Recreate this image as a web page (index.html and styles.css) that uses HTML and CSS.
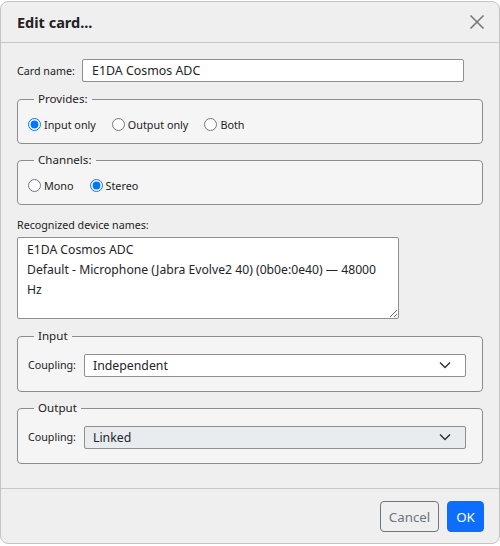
FILE: index.html
```html
<!DOCTYPE html>
<html>
<head>
<meta charset="utf-8">
<link rel="stylesheet" href="styles.css">
</head>
<body>
<div class="dialog">
  <div class="header">
    <h1 class="title">Edit card...</h1>
    <button class="close" aria-label="Close">
      <svg width="16" height="16" viewBox="0 0 16 16"><path d="M1.5 1.5 L14.5 14.5 M14.5 1.5 L1.5 14.5" stroke="#777" stroke-width="1.6" fill="none"/></svg>
    </button>
  </div>
  <div class="body">
    <div class="row name-row">
      <label class="lbl name-lbl" for="cn">Card name:</label>
      <input id="cn" class="text" type="text" value="E1DA Cosmos ADC">
    </div>

    <fieldset class="group">
      <legend>Provides:</legend>
      <div class="radios">
        <label class="radio"><input type="radio" name="prov" checked><span>Input only</span></label>
        <label class="radio"><input type="radio" name="prov"><span>Output only</span></label>
        <label class="radio"><input type="radio" name="prov"><span>Both</span></label>
      </div>
    </fieldset>

    <fieldset class="group">
      <legend>Channels:</legend>
      <div class="radios">
        <label class="radio"><input type="radio" name="ch"><span>Mono</span></label>
        <label class="radio"><input type="radio" name="ch" checked><span>Stereo</span></label>
      </div>
    </fieldset>

    <label class="lbl names-lbl" for="names">Recognized device names:</label>
    <textarea id="names" class="names">E1DA Cosmos ADC
Default - Microphone (Jabra Evolve2 40) (0b0e:0e40) — 48000 Hz</textarea>

    <fieldset class="group io">
      <legend>Input</legend>
      <div class="row">
        <label class="lbl coup-lbl">Coupling:</label>
        <div class="select-wrap">
          <select class="select"><option>Independent</option><option>Linked</option></select>
          <svg class="chev" width="12" height="8" viewBox="0 0 12 8"><path d="M1 1.5 L6 6.5 L11 1.5" stroke="#333" stroke-width="1.5" fill="none"/></svg>
        </div>
      </div>
    </fieldset>

    <fieldset class="group io">
      <legend>Output</legend>
      <div class="row">
        <label class="lbl coup-lbl">Coupling:</label>
        <div class="select-wrap">
          <select class="select disabled"><option>Linked</option><option>Independent</option></select>
          <svg class="chev" width="12" height="8" viewBox="0 0 12 8"><path d="M1 1.5 L6 6.5 L11 1.5" stroke="#333" stroke-width="1.5" fill="none"/></svg>
        </div>
      </div>
    </fieldset>
  </div>
  <div class="footer">
    <button class="btn cancel">Cancel</button>
    <button class="btn ok">OK</button>
  </div>
</div>
</body>
</html>
```

FILE: styles.css
```css
* { box-sizing: border-box; }
html, body { margin: 0; padding: 0; background: #fff; }
body {
  font-family: "Noto Sans", "Open Sans", sans-serif;
  color: #212529;
  padding-top: 1px;
}
.dialog {
  width: 500px;
  height: 543px;
  background: #efefef;
  border: 1px solid #c4c4c4;
  border-radius: 8px;
  display: flex;
  flex-direction: column;
  overflow: hidden;
}
.header {
  height: 41px;
  flex: none;
  border-bottom: 1px solid #c8c8c8;
  display: flex;
  align-items: center;
  justify-content: space-between;
  padding: 0 14px 0 16px;
}
.title {
  margin: 0;
  font-size: 14.5px;
  font-weight: 700;
  color: #222;
  line-height: 20px;
}
.close {
  border: 0;
  background: transparent;
  padding: 0;
  width: 16px;
  height: 16px;
  display: flex;
}
.body {
  padding: 16px 16px 0 16px;
  height: 446px;
  flex: none;
  border-bottom: 1px solid #c8c8c8;
  display: flex;
  flex-direction: column;
}
.row { display: flex; align-items: center; }
.lbl { font-size: 10.7px; color: #222; }
.name-lbl { width: 65px; }
.text {
  width: 382px;
  height: 23px;
  border: 1px solid #8f8f8f;
  border-radius: 2px;
  background: #fff;
  font-family: inherit;
  font-size: 12.4px;
  color: #212529;
  padding: 0 9px;
  margin: 0;
}
.group {
  margin: 7px 0 0 0;
  padding: 0 10px 9px 10px;
  border: 1px solid #8c8c8c;
  border-radius: 4px;
  background: #f5f5f5;
  width: 466px;
  min-width: 0;
  flex: none;
}
.group + .group { margin-top: 6px; }
.group legend {
  font-size: 11.6px;
  line-height: 20px;
  padding: 0 4px;
  margin-left: 6px;
  color: #222;
}
.radios {
  display: flex;
  gap: 16px;
  height: 20px;
  margin-top: 5px;
  align-items: center;
}
.radio {
  display: flex;
  align-items: center;
  font-size: 10.8px;
  color: #222;
}
.radio input {
  margin: 0 3px 0 0;
  width: 13px;
  height: 13px;
}
.names-lbl { margin-top: 11px; line-height: 18px; display: block; }
.names {
  margin-top: 3px;
  width: 382px;
  height: 82px;
  flex: none;
  border: 1px solid #8f8f8f;
  border-radius: 2px;
  background: #fff;
  font-family: inherit;
  font-size: 12.2px;
  line-height: 20px;
  color: #212529;
  padding: 2px 9px;
  resize: both;
}
.group.io { margin-top: 7px; padding-bottom: 15px; }
.group.io + .group.io { margin-top: 6px; }
.io .row { margin-top: 7px; }
.coup-lbl { width: 56px; }
.select-wrap { position: relative; width: 382px; height: 23px; }
.select {
  appearance: none;
  -webkit-appearance: none;
  width: 100%;
  height: 23px;
  border: 1px solid #8f8f8f;
  border-radius: 2px;
  background: #fff;
  font-family: inherit;
  font-size: 12.3px;
  color: #212529;
  padding: 0 8px;
  margin: 0;
}
.select.disabled { background: #e9ecef; }
.chev { position: absolute; right: 15px; top: 8px; pointer-events: none; }
.footer {
  display: flex;
  justify-content: flex-end;
  gap: 8px;
  padding: 12px 15px 11px 0;
}
.btn {
  height: 31px;
  border-radius: 4px;
  font-family: inherit;
  font-size: 13.3px;
  padding: 0;
  margin: 0;
}
.cancel {
  width: 59px;
  background: transparent;
  border: 1px solid #6c757d;
  color: #6c757d;
}
.ok {
  width: 37px;
  background: #0d6efd;
  border: 1px solid #0d6efd;
  color: #fff;
}
```
